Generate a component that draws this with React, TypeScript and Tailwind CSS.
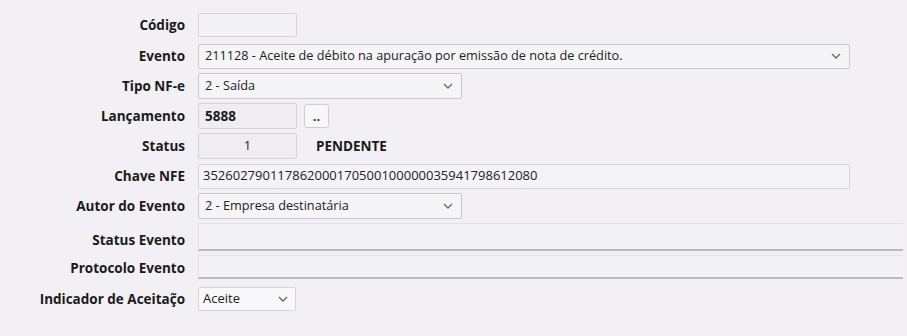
import React from 'react';

const Chevron: React.FC = () => (
  <svg width="10" height="6" viewBox="0 0 10 6" className="shrink-0">
    <path d="M1 1l4 4 4-4" fill="none" stroke="#6b6970" strokeWidth="1.4" />
  </svg>
);

const Label: React.FC<{ children: React.ReactNode; className?: string }> = ({ children, className = '' }) => (
  <div className={`w-[186px] shrink-0 pr-[1px] text-right text-[13.5px] font-bold text-[#1a1a1a] ${className}`}>{children}</div>
);

const Select: React.FC<{ value: string; className?: string }> = ({ value, className = '' }) => (
  <div
    className={`ml-[12px] flex h-[25px] items-center justify-between rounded-[2px] border border-[#cbc9ce] bg-[#f5f4f7] pl-[6px] pr-[8px] text-[12.7px] text-[#222] ${className}`}
  >
    <span className="truncate">{value}</span>
    <Chevron />
  </div>
);

export default function App() {
  return (
    <div
      className="h-[336px] w-[907px] overflow-hidden bg-[#f2f0f4] pt-[11px]"
      style={{ fontFamily: '"Open Sans", "Liberation Sans", sans-serif' }}
    >
      {/* Código */}
      <div className="flex h-[28px] items-center">
        <Label>Código</Label>
        <div className="ml-[12px] h-[24px] w-[99px] rounded-[2px] border border-[#d6d4d9] bg-[#f3f2f5]" />
      </div>

      {/* Evento */}
      <div className="mt-[2px] flex h-[30px] items-center">
        <Label>Evento</Label>
        <Select className="w-[652px]" value="211128 - Aceite de débito na apuração por emissão de nota de crédito." />
      </div>

      {/* Tipo NF-e */}
      <div className="flex h-[30px] items-center">
        <Label>Tipo NF-e</Label>
        <Select className="h-[26px] w-[264px]" value="2 - Saída" />
      </div>

      {/* Lançamento */}
      <div className="flex h-[30px] items-center">
        <Label>Lançamento</Label>
        <div className="ml-[12px] flex h-[26px] w-[99px] items-center rounded-[2px] border border-[#d6d4d9] bg-[#efedf1] pl-[6px] text-[13.5px] font-bold text-[#1a1a1a]">
          5888
        </div>
        <button
          type="button"
          className="ml-[7px] flex h-[24px] w-[25px] items-end justify-center rounded-[3px] border border-[#cfcdd2] bg-[#f7f6f9] pb-[4px] text-[13px] font-bold leading-none text-[#333]"
        >
          ..
        </button>
      </div>

      {/* Status */}
      <div className="flex h-[30px] items-center">
        <Label>Status</Label>
        <div className="ml-[12px] flex h-[26px] w-[99px] items-center justify-center rounded-[2px] border border-[#d6d4d9] bg-[#efedf1] text-[13px] text-[#222]">
          1
        </div>
        <span className="ml-[19px] text-[13.5px] font-bold text-[#1a1a1a]">PENDENTE</span>
      </div>

      {/* Chave NFE */}
      <div className="flex h-[30px] items-center">
        <Label>Chave NFE</Label>
        <div className="ml-[12px] flex h-[25px] w-[652px] items-center rounded-[2px] border border-[#d6d4d9] bg-[#f4f3f6] pl-[4px] text-[13px] text-[#222]">
          352602790117862000170500100000035941798612080
        </div>
      </div>

      {/* Autor do Evento */}
      <div className="flex h-[30px] items-center">
        <Label>Autor do Evento</Label>
        <Select className="h-[26px] w-[264px]" value="2 - Empresa destinatária" />
      </div>

      {/* Status Evento */}
      <div className="mt-[2px] flex h-[28px] items-end">
        <Label className="pb-[1px]">Status Evento</Label>
        <div className="ml-[12px] h-[28px] w-[705px] border-t border-l border-[#e4e2e7] border-b-2 border-b-[#bcbac0] bg-[#f3f2f5]" />
      </div>

      {/* Protocolo Evento */}
      <div className="mt-[4px] flex h-[24px] items-end">
        <Label className="pb-[1px]">Protocolo Evento</Label>
        <div className="ml-[12px] h-[24px] w-[705px] border-t border-l border-[#e4e2e7] border-b-2 border-b-[#bcbac0] bg-[#f3f2f5]" />
      </div>

      {/* Indicador de Aceitação */}
      <div className="mt-[8px] flex h-[24px] items-center">
        <Label>Indicador de Aceitaç̃o</Label>
        <div className="ml-[12px] flex h-[24px] w-[98px] items-center justify-between rounded-[2px] border border-[#d6d4d9] bg-[#f8f7fa] pl-[4px] pr-[7px] text-[13px] text-[#222]">
          <span>Aceite</span>
          <Chevron />
        </div>
      </div>
    </div>
  );
}
